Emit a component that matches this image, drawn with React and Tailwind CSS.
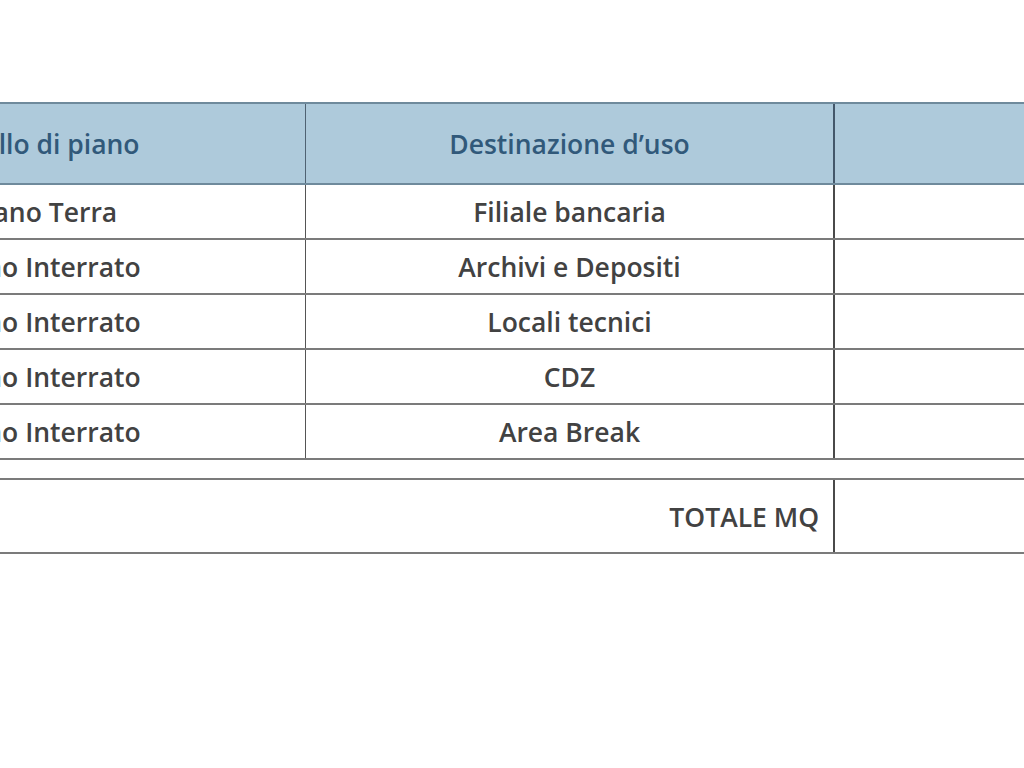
const rows = [
    { piano: "Piano Terra", uso: "Filiale bancaria" },
    { piano: "Piano Interrato", uso: "Archivi e Depositi" },
    { piano: "Piano Interrato", uso: "Locali tecnici" },
    { piano: "Piano Interrato", uso: "CDZ" },
    { piano: "Piano Interrato", uso: "Area Break" },
]

function App() {
    return (
        <div className="h-[768px] w-[1024px] overflow-hidden bg-white pt-[102px] font-['Open_Sans',sans-serif]">
            <div className="ml-[-218px] w-[1360px]">
                {/* intestazione */}
                <div className="flex h-[83px] border-y-2 border-[#6f8a9c] bg-[#aecadb] text-[26.5px] font-semibold text-[#31597a]">
                    <div className="flex w-[524px] items-center justify-center border-r border-[#4f6272] pt-[3px]">Livello di piano</div>
                    <div className="flex w-[529px] items-center justify-center border-r-2 border-[#44576a] pt-[3px]">Destinazione d’uso</div>
                    <div className="flex-1"></div>
                </div>

                {rows.map((row, i) => (
                    <div key={i} className="flex h-[55px] border-b-2 border-[#7b7b7b] text-[26.5px] font-semibold text-[#424242]">
                        <div className="flex w-[524px] items-center justify-center border-r border-[#555] pt-[3px]">{row.piano}</div>
                        <div className="flex w-[529px] items-center justify-center border-r-2 border-[#4a4a4a] pt-[3px]">{row.uso}</div>
                        <div className="flex-1"></div>
                    </div>
                ))}

                {/* totale */}
                <div className="mt-[18px] flex h-[76px] border-y-2 border-[#7b7b7b] text-[26.5px] font-semibold text-[#424242]">
                    <div className="flex w-[1053px] items-center justify-end border-r-2 border-[#4a4a4a] pr-[14px] pt-[3px]">TOTALE MQ</div>
                    <div className="flex-1"></div>
                </div>
            </div>
        </div>
    )
}

export default App
